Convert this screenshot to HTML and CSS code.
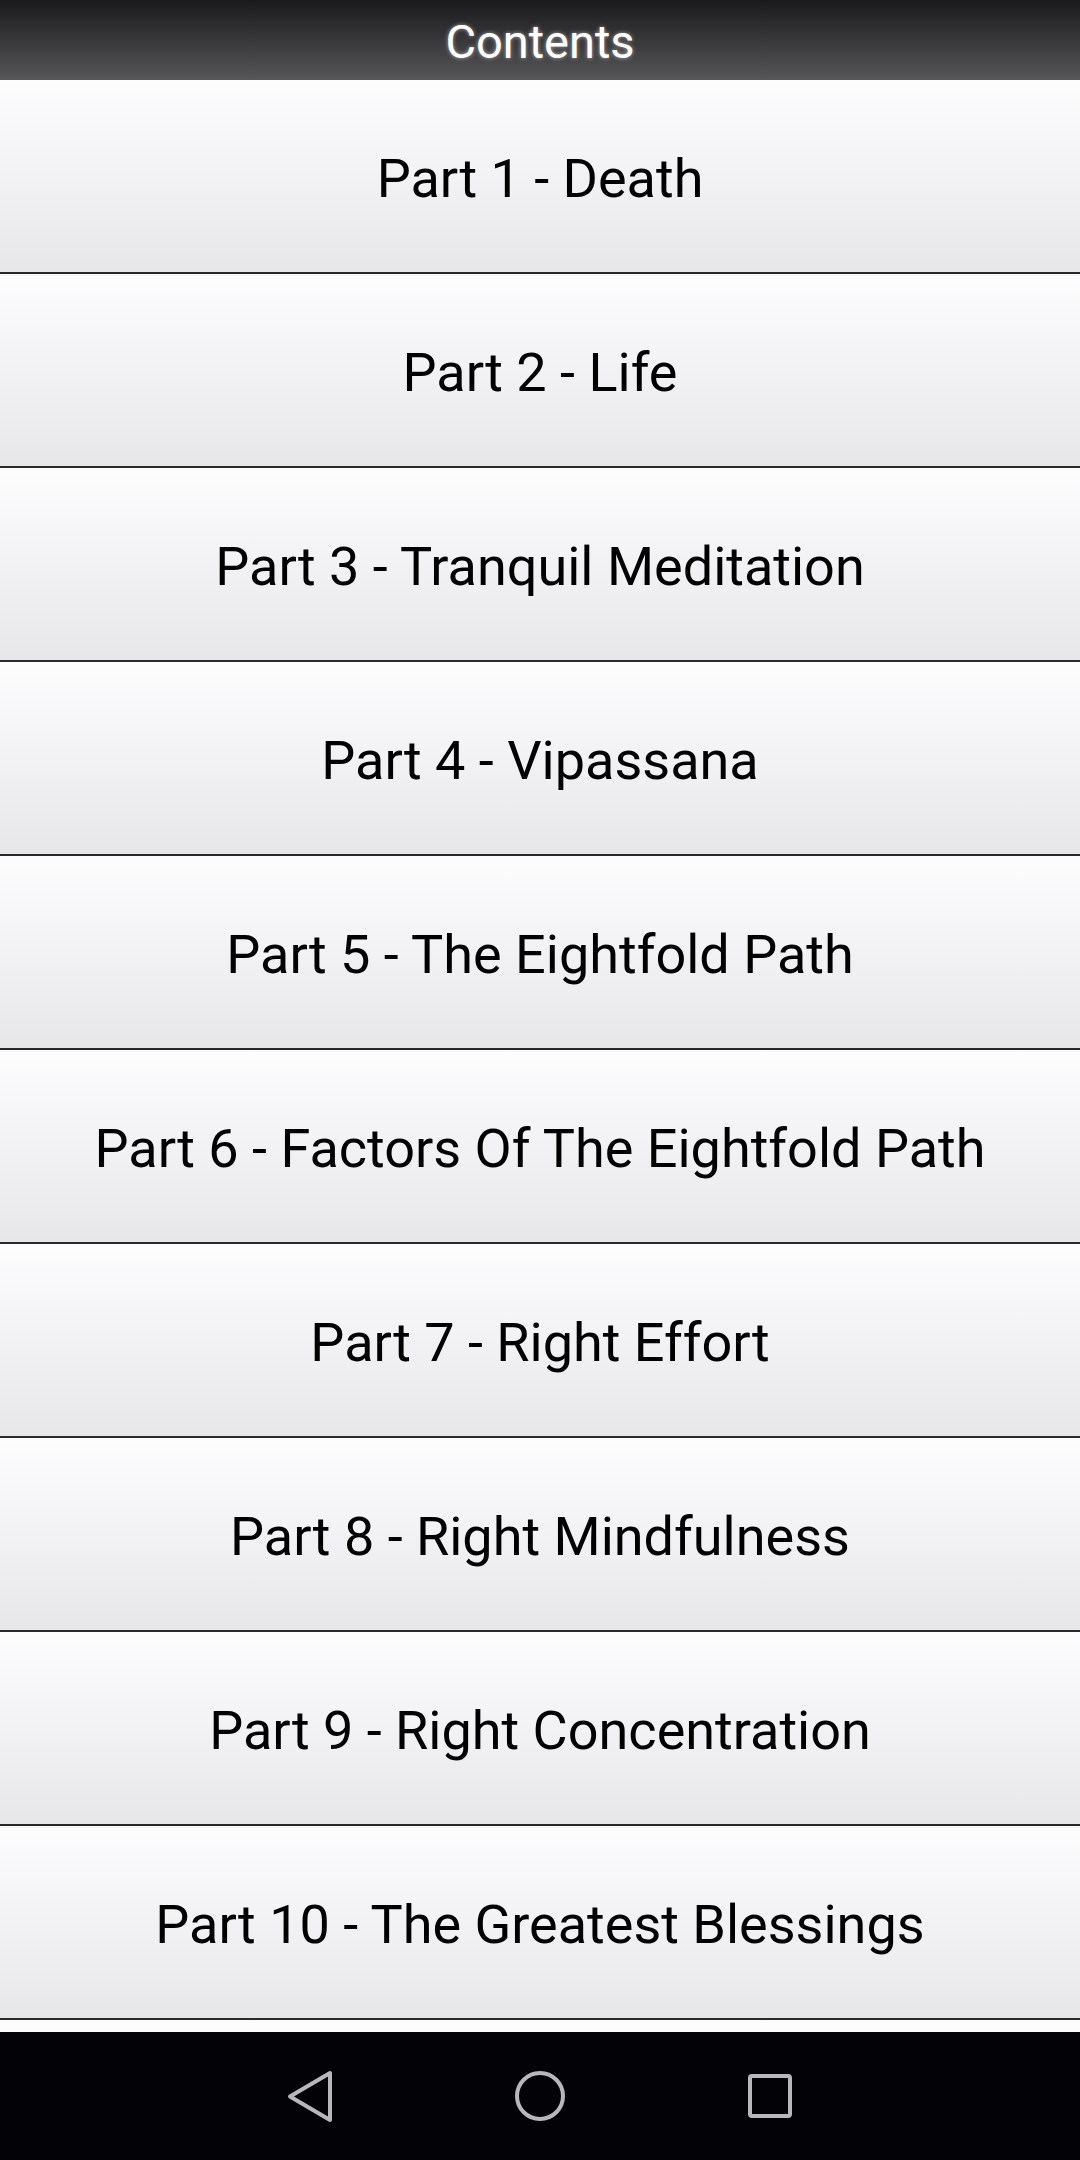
FILE: index.html
```html
<!DOCTYPE html>
<html lang="en">

<head>
  <meta charset="UTF-8" />
  <meta name="viewport" content="width=device-width, initial-scale=1.0" />
  <title>Contents</title>
  <link rel="stylesheet" href="styles.css">
</head>

<body>
  <div class="screen">
    <header class="title-bar">
      <h1>Contents</h1>
    </header>

    <ul class="chapters">
      <li><a href="#">Part 1 - Death</a></li>
      <li><a href="#">Part 2 - Life</a></li>
      <li><a href="#">Part 3 - Tranquil Meditation</a></li>
      <li><a href="#">Part 4 - Vipassana</a></li>
      <li><a href="#">Part 5 - The Eightfold Path</a></li>
      <li><a href="#">Part 6 - Factors Of The Eightfold Path</a></li>
      <li><a href="#">Part 7 - Right Effort</a></li>
      <li><a href="#">Part 8 - Right Mindfulness</a></li>
      <li><a href="#">Part 9 - Right Concentration</a></li>
      <li><a href="#">Part 10 - The Greatest Blessings</a></li>
      <!-- next row, scrolled below the fold -->
      <li><a href="#"></a></li>
    </ul>

    <nav class="nav-bar">
      <svg class="nav-icon" viewBox="0 0 60 60">
        <polygon points="50,7 50,54 10,30.5" />
      </svg>
      <svg class="nav-icon" viewBox="0 0 60 60">
        <circle cx="30" cy="30" r="23" />
      </svg>
      <svg class="nav-icon" viewBox="0 0 60 60">
        <rect x="10" y="10" width="40" height="40" rx="2" />
      </svg>
    </nav>
  </div>
</body>

</html>
```

FILE: styles.css
```css
* {
  box-sizing: border-box;
  margin: 0;
  padding: 0;
}

body {
  font-family: Roboto, 'Noto Sans', sans-serif;
  background: #fff;
}

.screen {
  display: flex;
  flex-direction: column;
  width: 1080px;
  height: 2160px;
  overflow: hidden;
}

.title-bar {
  height: 80px;
  flex-shrink: 0;
  display: flex;
  align-items: center;
  justify-content: center;
  background: linear-gradient(to bottom, #1a191b, #565558);
}

.title-bar h1 {
  font-size: 47px;
  font-weight: 400;
  color: #fff;
  text-shadow: 0 0 4px rgba(255, 255, 255, 0.55);
  padding-top: 3px;
}

.chapters {
  list-style: none;
  flex: 1;
  overflow: hidden;
}

.chapters li {
  border-bottom: 2px solid #2a292b;
}

.chapters a {
  display: flex;
  align-items: center;
  justify-content: center;
  height: 192px;
  padding-top: 5px;
  background: linear-gradient(to bottom, #fdfdfe, #e7e6e9);
  color: #000;
  font-size: 54px;
  text-decoration: none;
}

.nav-bar {
  height: 128px;
  flex-shrink: 0;
  background: #030206;
  display: flex;
  align-items: center;
  justify-content: center;
  gap: 170px;
}

.nav-icon {
  width: 60px;
  height: 60px;
  fill: none;
  stroke: #b8b8b8;
  stroke-width: 4;
  stroke-linejoin: round;
}
```
